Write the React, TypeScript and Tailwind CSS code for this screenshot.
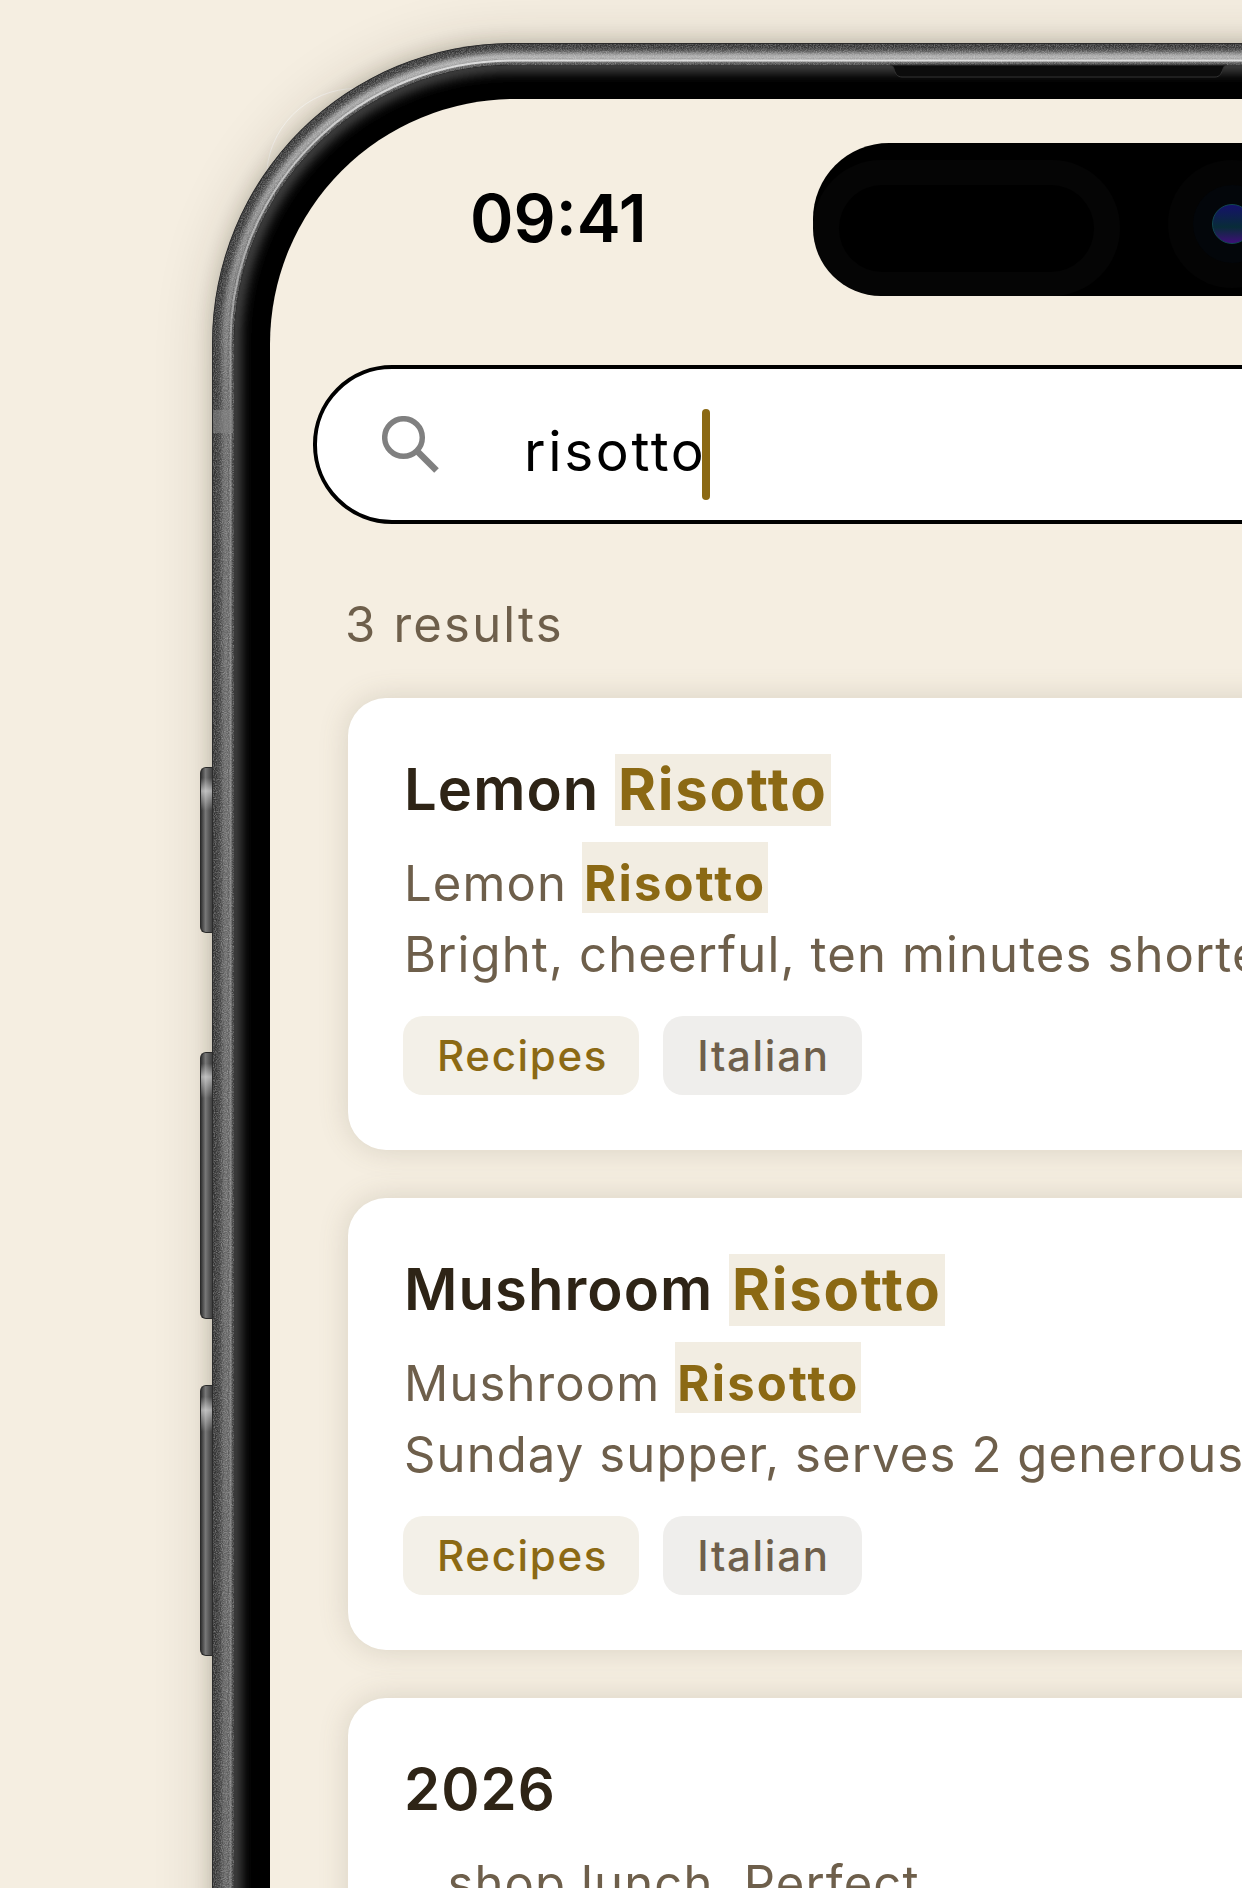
import React from "react";

const results = [
  {
    title: "Lemon ",
    hit: "Risotto",
    line: "Bright, cheerful, ten minutes shorter than the classic",
  },
  {
    title: "Mushroom ",
    hit: "Risotto",
    line: "Sunday supper, serves 2 generously with a salad",
  },
];

const PhoneFrame = () => (
  <svg className="absolute inset-0" width="1400" height="2400" viewBox="0 0 1400 2400" fill="none">
    <defs>
      <linearGradient id="rim" x1="0" y1="0" x2="0" y2="1900" gradientUnits="userSpaceOnUse">
        <stop offset="0" stopColor="#e0e0e0" />
        <stop offset="0.09" stopColor="#b0b0b0" />
        <stop offset="0.2" stopColor="#808080" />
        <stop offset="1" stopColor="#747474" />
      </linearGradient>
      <filter id="soft" x="-5%" y="-5%" width="110%" height="110%">
        <feGaussianBlur stdDeviation="3" />
      </filter>
      <filter id="softer" x="-5%" y="-5%" width="110%" height="110%">
        <feGaussianBlur stdDeviation="6" />
      </filter>
      <filter id="grain" x="0" y="0" width="100%" height="100%">
        <feTurbulence type="fractalNoise" baseFrequency="0.85" numOctaves="2" seed="4" />
        <feColorMatrix values="0 0 0 0 0.85  0 0 0 0 0.85  0 0 0 0 0.85  1.6 0 0 0 -0.55" />
        <feComposite in2="SourceAlpha" operator="in" />
      </filter>
      <clipPath id="metal">
        <path
          clipRule="evenodd"
          d="M300 0H1100A300 300 0 0 1 1400 300V2100A300 300 0 0 1 1100 2400H300A300 300 0 0 1 0 2100V300A300 300 0 0 1 300 0ZM300 22A278 278 0 0 0 22 300V2100A278 278 0 0 0 300 2378H1100A278 278 0 0 0 1378 2100V300A278 278 0 0 0 1100 22Z"
        />
      </clipPath>
      <clipPath id="glass">
        <rect x="22" y="22" width="1356" height="2356" rx="278" />
      </clipPath>
    </defs>

    <rect width="1400" height="2400" rx="300" fill="#343434" />
    <g clipPath="url(#metal)">
      <rect x="14" y="14" width="1372" height="2372" rx="286" stroke="url(#rim)" strokeWidth="7" filter="url(#soft)" />
      <rect x="18.500" y="17.500" width="1363" height="2365" rx="282" stroke="url(#rim)" strokeWidth="2" />
      <rect width="1400" height="2400" rx="300" fill="#000" filter="url(#grain)" opacity="0.45" />
      <rect y="367" width="21" height="23" fill="#858585" opacity="0.6" />
      <rect x="0.500" y="0.500" width="1399" height="2399" rx="299.500" stroke="#2b2b2b" />
    </g>

    <rect x="22" y="22" width="1356" height="2356" rx="278" fill="#000" />
    <g clipPath="url(#glass)">
      <rect x="22" y="22" width="1356" height="2356" rx="278" stroke="#484848" strokeWidth="14" filter="url(#softer)" />
    </g>
    <path d="M678 22h337c-2 0-3 1-4 4-1.500 4-3 8-8 8H690c-5 0-7-4-8-8-1-3-2-4-4-4Z" fill="#0c0c0c" stroke="#333" />
  </svg>
);

const SideButtons = () => (
  <>
    <div className="absolute left-[-12px] top-[724px] h-[166px] w-[14px] rounded-l-[6px] border-y border-l border-[#2a2a2a] bg-[linear-gradient(180deg,transparent_6%,rgba(255,255,255,0.55)_14%,transparent_26%),linear-gradient(90deg,#333,#777_35%,#444_80%)]" />
    <div className="absolute left-[-12px] top-[1009px] h-[267px] w-[14px] rounded-l-[6px] border-y border-l border-[#2a2a2a] bg-[linear-gradient(180deg,transparent_4%,rgba(255,255,255,0.55)_9%,transparent_17%),linear-gradient(90deg,#333,#777_35%,#444_80%)]" />
    <div className="absolute left-[-12px] top-[1342px] h-[271px] w-[14px] rounded-l-[6px] border-y border-l border-[#2a2a2a] bg-[linear-gradient(180deg,transparent_4%,rgba(255,255,255,0.55)_9%,transparent_17%),linear-gradient(90deg,#333,#777_35%,#444_80%)]" />
  </>
);

const Island = () => (
  <div className="flex h-[153px] w-[800px] shrink-0 rounded-[76px] bg-black pt-[17px]">
    <div className="flex h-[136px] w-[307px] shrink-0 items-center justify-center rounded-full bg-[#050505]">
      <div className="h-[87px] w-[255px] rounded-full bg-black" />
    </div>
    <div className="ml-[48px] flex h-[128px] w-[128px] shrink-0 items-center justify-center rounded-full bg-[#040404]">
      <div className="flex h-[78px] w-[78px] items-center justify-center rounded-full bg-[#03060a]">
        <div className="h-[40px] w-[40px] rounded-full border border-[#124650] bg-[linear-gradient(180deg,#15126a,#082c38_58%,#3d0f78)]" />
      </div>
    </div>
  </div>
);

const SearchIcon = () => (
  <svg width="57" height="57" viewBox="0 0 57 57" fill="none" stroke="#808080" className="shrink-0">
    <circle cx="21.500" cy="21.500" r="18.800" strokeWidth="5.500" />
    <path d="M34.500 34.500L54.500 54.500" strokeWidth="6.500" />
  </svg>
);

const Tags = () => (
  <div className="-ml-[1px] mt-[26px] flex gap-[24px] text-[42px] font-medium leading-[79px] tracking-[0.04em]">
    <span className="h-[79px] rounded-[20px] bg-[#f3f0e8] pl-[34px] pr-[31px] text-[#8b6914]">Recipes</span>
    <span className="h-[79px] rounded-[20px] bg-[#efeeec] pl-[34px] pr-[32px] text-[#6e5f4b]">Italian</span>
  </div>
);

export default function App() {
  return (
    <div className="relative h-[1888px] w-[1242px] overflow-hidden bg-[#f5eee1] pl-[212px] pt-[43px] font-['Inter',sans-serif]">
      {/* edge of a second sheet peeking out behind the corner */}
      <div className="absolute left-[266px] top-[88px] h-[300px] w-[300px] rounded-[90px] border border-white/70" />

      <div className="relative h-[2400px] w-[1400px] rounded-[300px] pl-[58px] pt-[56px] shadow-[0_-2px_18px_rgba(40,30,15,0.2),0_0_60px_rgba(40,30,15,0.16)]">
        <SideButtons />
        <PhoneFrame />

        <div className="relative h-[2288px] w-[1284px] overflow-hidden rounded-[245px] bg-[#f5eee1] pt-[44px]">
          <div className="flex h-[153px] pl-[200px]">
            <div className="w-[343px] shrink-0 text-[66px] font-semibold leading-[150px] text-black">09:41</div>
            <Island />
          </div>

          <div className="ml-[43px] mt-[69px] flex h-[159px] w-[1100px] items-center rounded-[79px] border-4 border-black bg-white pl-[65px]">
            <SearchIcon />
            <span className="ml-[85px] mt-[14px] text-[55px] leading-none tracking-[0.048em] text-black">risotto</span>
            <span className="-ml-[4px] mt-[19px] h-[91px] w-[8px] rounded-full bg-[#8b6914]" />
          </div>

          <div className="ml-[75px] mt-[73px] text-[49px] leading-[56px] tracking-[0.045em] text-[#6e5f4b]">3 results</div>

          <div className="ml-[78px] mt-[45px] flex w-[1000px] flex-col gap-[48px]">
            {results.map((r) => (
              <div
                key={r.title}
                className="h-[452px] rounded-[38px] bg-white pl-[56px] pt-[56px] shadow-[0_0_30px_rgba(107,93,74,0.2)]"
              >
                <div className="whitespace-nowrap text-[58px] font-semibold leading-[71px] tracking-[0.018em] text-[#2e2416]">
                  {r.title}
                  <span className="bg-[#f2ede2] px-[3px] pb-[2px] font-bold tracking-[0.03em] text-[#8b6914]">{r.hit}</span>
                </div>
                <div className="mt-[23px] whitespace-nowrap text-[49px] leading-[71px] tracking-[0.023em] text-[#6e5f4b]">
                  {r.title}
                  <span className="bg-[#f2ede2] px-[2px] pt-[12px] font-bold tracking-[0.045em] text-[#8b6914]">{r.hit}</span>
                  <br />
                  {r.line}
                </div>
                <Tags />
              </div>
            ))}

            <div className="h-[452px] rounded-[38px] bg-white pl-[56px] pt-[56px] shadow-[0_0_30px_rgba(107,93,74,0.2)]">
              <div className="text-[58px] font-semibold leading-[71px] tracking-[0.018em] text-[#2e2416]">2026</div>
              <div className="mt-[23px] whitespace-nowrap text-[49px] leading-[71px] tracking-[0.023em] text-[#6e5f4b]">
                …shop lunch. Perfect
              </div>
            </div>
          </div>
        </div>
      </div>
    </div>
  );
}
